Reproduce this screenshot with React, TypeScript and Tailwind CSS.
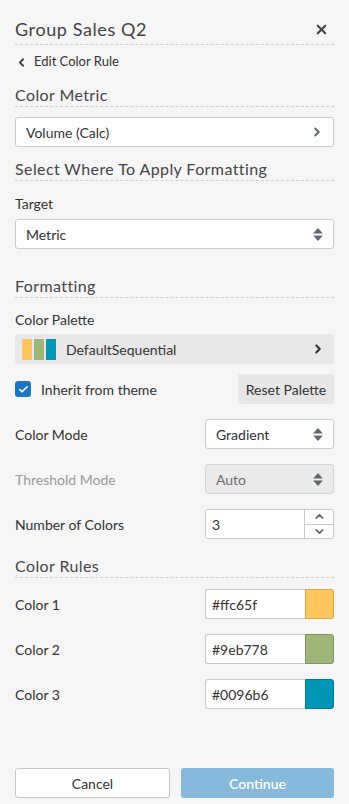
import React from 'react';
import { ChevronLeft, ChevronRight, ChevronUp, ChevronDown, X, Check } from 'lucide-react';

const font = { fontFamily: 'Lato, "Liberation Sans", sans-serif' };

const UpDown = ({ className = '' }: { className?: string }) => (
  <svg width="10" height="15" viewBox="0 0 10 15" className={className}>
    <path d="M5 1 L9.8 6.5 H0.2 Z" fill="currentColor" />
    <path d="M5 14 L9.8 8.5 H0.2 Z" fill="currentColor" />
  </svg>
);

const Heading: React.FC<{ children: React.ReactNode; className?: string }> = ({ children, className = '' }) => (
  <div className={`h-[23px] flex items-center border-b border-dashed border-[#cfcfcf] text-[16px] tracking-[0.4px] text-[#454545] ${className}`}>
    {children}
  </div>
);

const SelectBox: React.FC<{ value: string; disabled?: boolean; className?: string }> = ({ value, disabled, className = '' }) => (
  <div
    className={`h-[30px] flex items-center justify-between pl-[10px] pr-[10px] rounded-[3px] border text-[14px] ${
      disabled ? 'bg-[#ebebeb] border-[#d6d6d6] text-[#6b6b6b]' : 'bg-white border-[#cacaca] text-[#333]'
    } ${className}`}
  >
    <span>{value}</span>
    <UpDown className="text-[#5d6874]" />
  </div>
);

const ColorRow: React.FC<{ label: string; hex: string; border: string; className?: string }> = ({ label, hex, border, className = '' }) => (
  <div className={`h-[30px] flex items-center justify-between ${className}`}>
    <span className="text-[14px] text-[#333]">{label}</span>
    <div className="w-[129px] h-[30px] flex">
      <div className="flex-1 bg-white border border-r-0 border-[#cacaca] rounded-l-[3px] flex items-center pl-[6px] text-[14px] text-[#333]">
        {hex}
      </div>
      <div className="w-[29px] h-full rounded-r-[3px] border" style={{ backgroundColor: hex, borderColor: border }} />
    </div>
  </div>
);

export default function App() {
  return (
    <div className="w-[349px] h-[804px] bg-[#f6f6f6] px-[15px] flex flex-col" style={font}>
      <div className="mt-[14px] h-[31px] flex items-center justify-between border-b border-dashed border-[#cfcfcf]">
        <span className="text-[18px] tracking-[0.6px] text-[#444]">Group Sales Q2</span>
        <X className="w-[15px] h-[15px] text-[#444] mr-[5px]" strokeWidth={3.4} />
      </div>

      <div className="mt-[7px] h-[20px] flex items-center gap-[6px] text-[13px] text-[#333]">
        <ChevronLeft className="w-[13px] h-[13px] text-[#444]" strokeWidth={3.4} />
        <span>Edit Color Rule</span>
      </div>

      <Heading className="mt-[12px]">Color Metric</Heading>

      <div className="mt-[10px] h-[30px] flex items-center justify-between bg-white border border-[#cacaca] rounded-[3px] pl-[10px] pr-[9px] text-[14px] text-[#333]">
        <span>Volume (Calc)</span>
        <ChevronRight className="w-[14px] h-[14px] text-[#5d6874]" strokeWidth={3.4} />
      </div>

      <Heading className="mt-[11px]">Select Where To Apply Formatting</Heading>

      <div className="mt-[14px] h-[16px] flex items-center text-[14px] text-[#333]">Target</div>
      <SelectBox value="Metric" className="mt-[8px]" />

      <Heading className="mt-[26px]">Formatting</Heading>

      <div className="mt-[13px] h-[16px] flex items-center text-[14px] text-[#333]">Color Palette</div>

      <div className="mt-[7px] h-[30px] flex items-center bg-[#e8e8e8] rounded-[3px] pl-[7px] pr-[9px]">
        <div className="flex gap-[2px]">
          <div className="w-[10px] h-[21px] bg-[#ffc65f]" />
          <div className="w-[10px] h-[21px] bg-[#9eb778]" />
          <div className="w-[10px] h-[21px] bg-[#0096b6]" />
        </div>
        <span className="ml-[10px] text-[14px] text-[#333] flex-1">DefaultSequential</span>
        <ChevronRight className="w-[14px] h-[14px] text-[#333]" strokeWidth={3.6} />
      </div>

      <div className="mt-[10px] h-[30px] flex items-center justify-between">
        <div className="flex items-center gap-[10px]">
          <div className="w-[16px] h-[16px] rounded-[3px] bg-[#1d75bd] flex items-center justify-center">
            <Check className="w-[11px] h-[11px] text-white" strokeWidth={3.5} />
          </div>
          <span className="text-[14px] text-[#333]">Inherit from theme</span>
        </div>
        <div className="w-[96px] h-[30px] bg-[#e6e6e6] rounded-[3px] flex items-center justify-center text-[14px] text-[#333]">
          Reset Palette
        </div>
      </div>

      <div className="mt-[15px] h-[30px] flex items-center justify-between">
        <span className="text-[14px] text-[#333]">Color Mode</span>
        <SelectBox value="Gradient" className="w-[129px]" />
      </div>

      <div className="mt-[15px] h-[30px] flex items-center justify-between">
        <span className="text-[14px] text-[#9a9a9a]">Threshold Mode</span>
        <SelectBox value="Auto" disabled className="w-[129px]" />
      </div>

      <div className="mt-[15px] h-[30px] flex items-center justify-between">
        <span className="text-[14px] text-[#333]">Number of Colors</span>
        <div className="w-[129px] h-[30px] flex bg-white border border-[#cacaca] rounded-[3px]">
          <div className="flex-1 flex items-center pl-[6px] text-[14px] text-[#333]">3</div>
          <div className="w-[29px] border-l border-[#cacaca] flex flex-col">
            <div className="flex-1 flex items-center justify-center border-b border-[#cacaca]">
              <ChevronUp className="w-[13px] h-[13px] text-[#5d6874]" strokeWidth={3.2} />
            </div>
            <div className="flex-1 flex items-center justify-center">
              <ChevronDown className="w-[13px] h-[13px] text-[#5d6874]" strokeWidth={3.2} />
            </div>
          </div>
        </div>
      </div>

      <Heading className="mt-[16px]">Color Rules</Heading>

      <ColorRow label="Color 1" hex="#ffc65f" border="#d9a443" className="mt-[11px]" />
      <ColorRow label="Color 2" hex="#9eb778" border="#7e985a" className="mt-[15px]" />
      <ColorRow label="Color 3" hex="#0096b6" border="#007a96" className="mt-[15px]" />

      <div className="mt-auto mb-[6px] flex gap-[11px]">
        <div className="flex-1 h-[30px] bg-white border border-[#c6c6c6] rounded-[3px] flex items-center justify-center text-[14px] text-[#333]">
          Cancel
        </div>
        <div className="flex-1 h-[30px] bg-[#85b8da] rounded-[3px] flex items-center justify-center text-[14px] text-white font-semibold">
          Continue
        </div>
      </div>
    </div>
  );
}
